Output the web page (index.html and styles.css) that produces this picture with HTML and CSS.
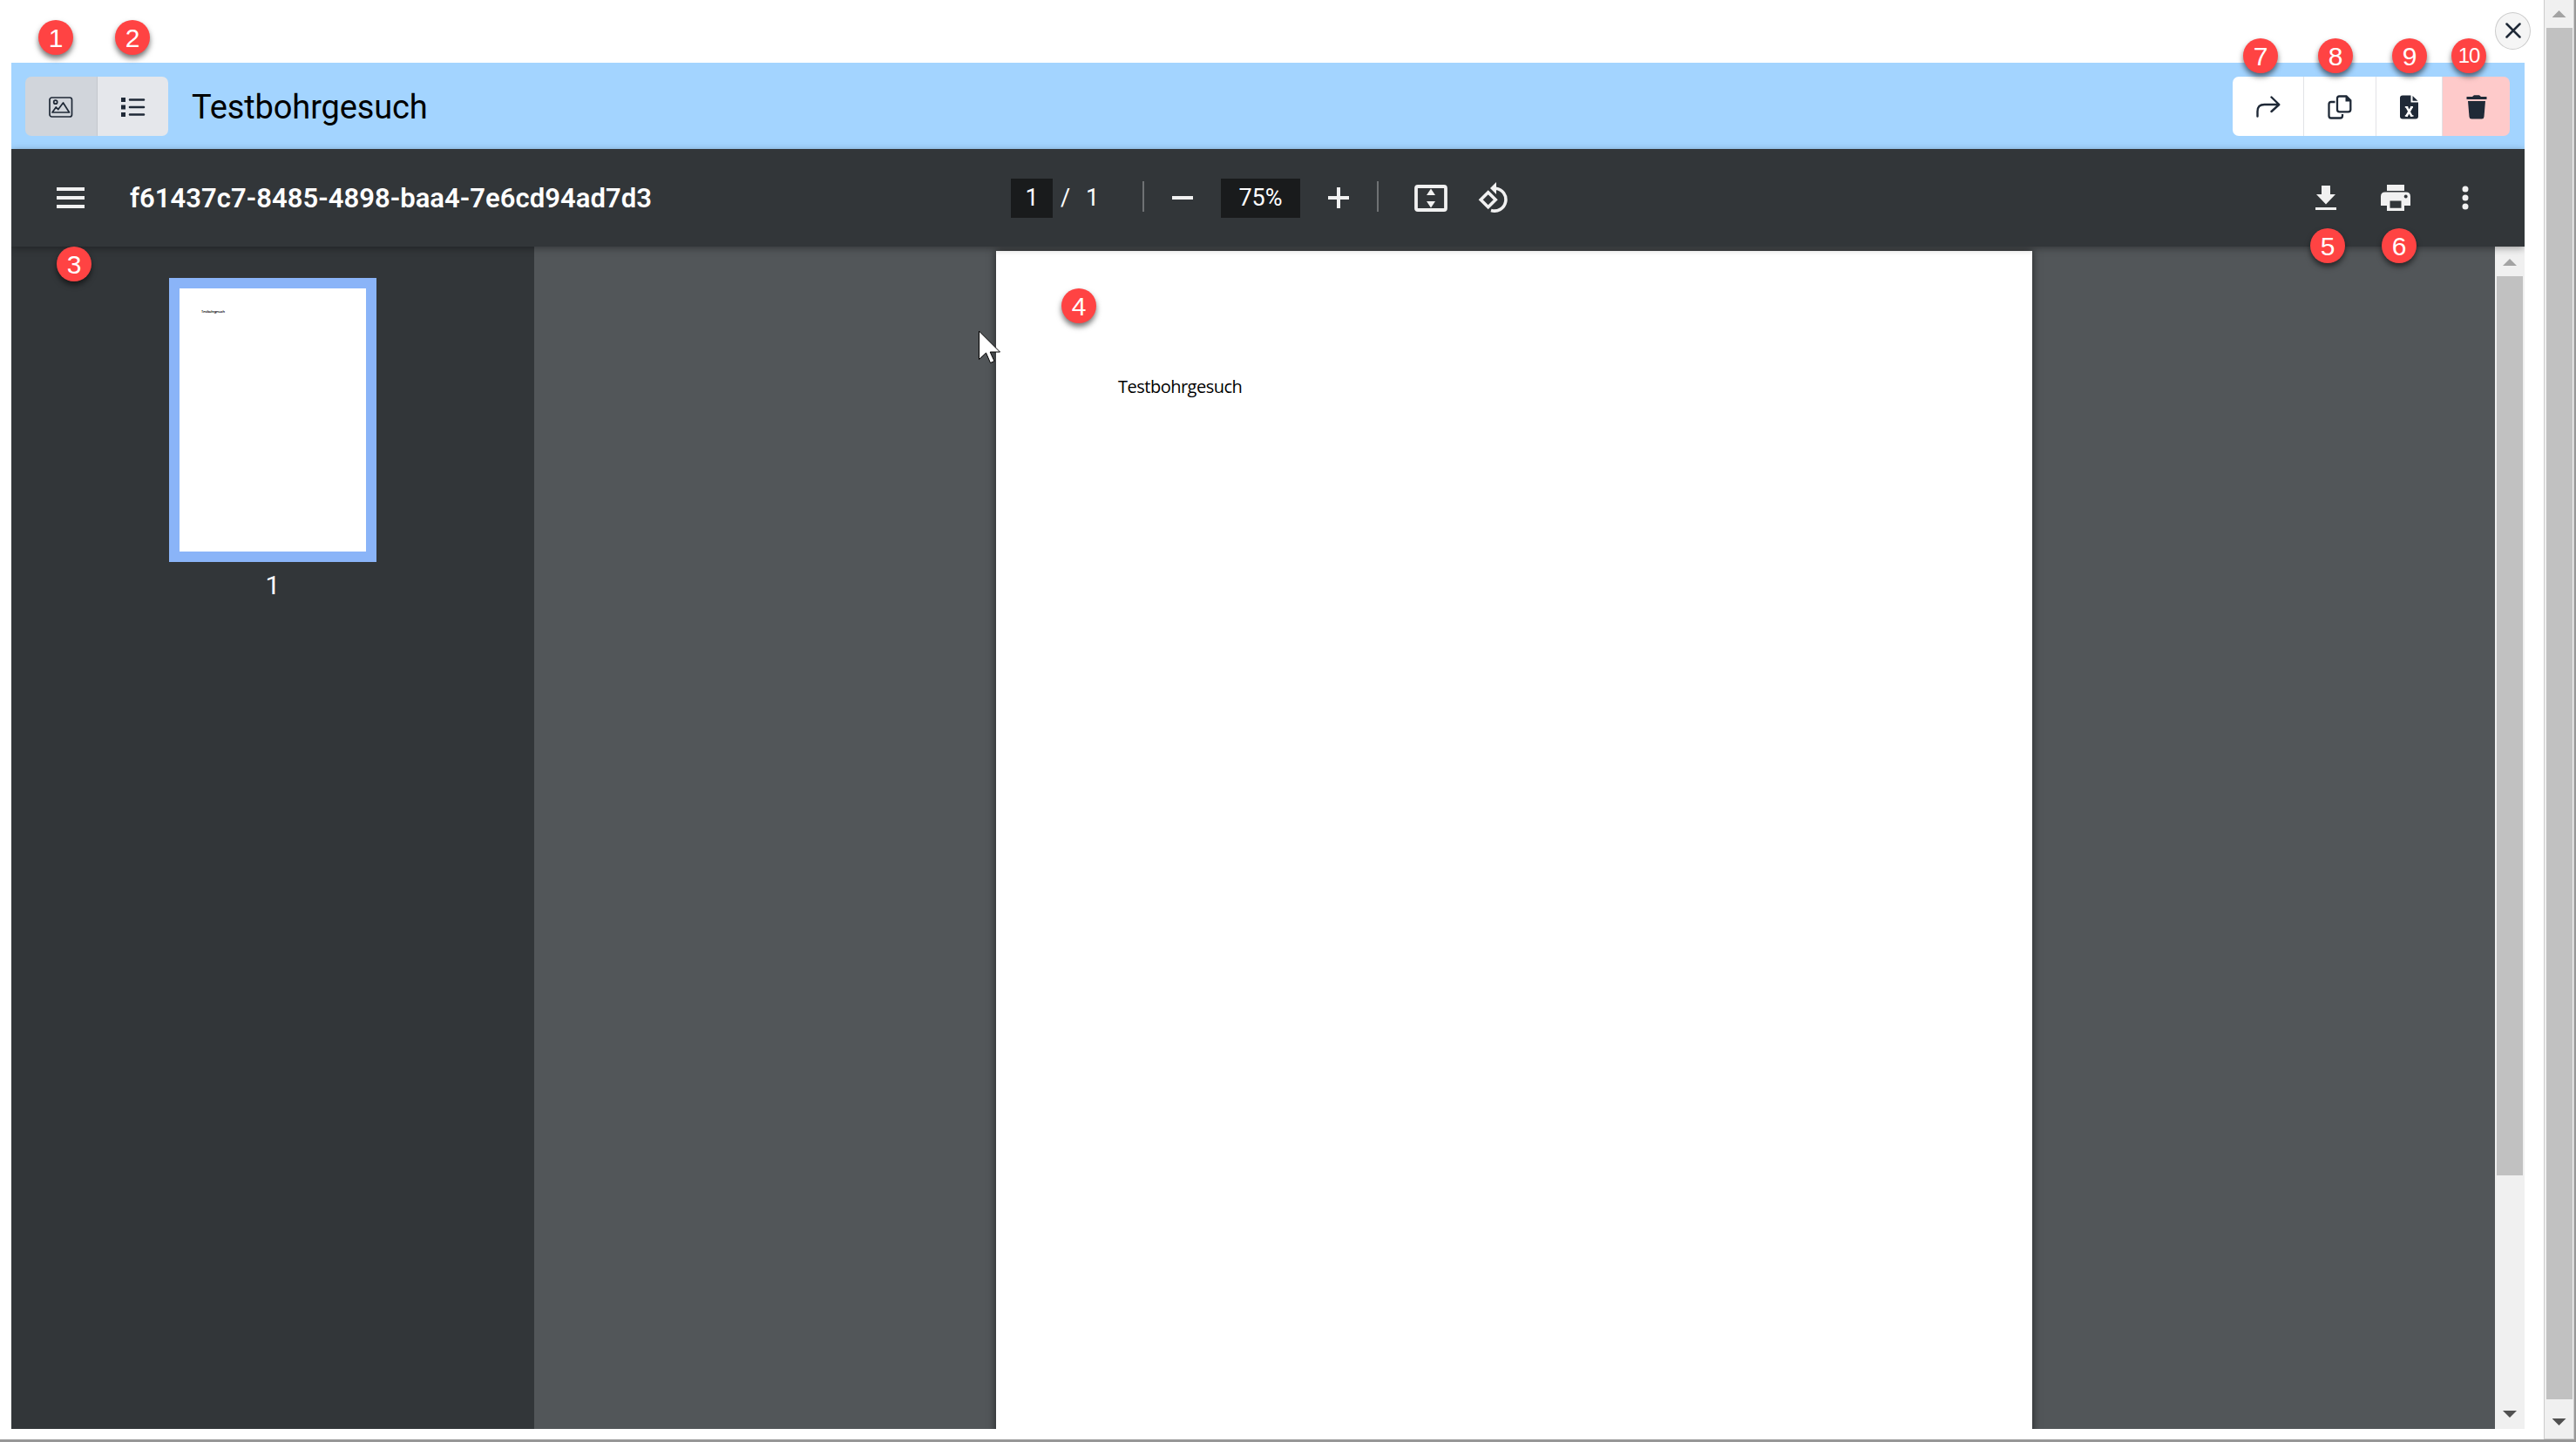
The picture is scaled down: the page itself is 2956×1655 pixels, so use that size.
FILE: index.html
```html
<!DOCTYPE html>
<html lang="de">
<head>
  <meta charset="UTF-8">
  <title>Testbohrgesuch</title>
  <link rel="stylesheet" href="styles.css">
</head>
<body>

<div class="window">
  <div class="dialog">
    <div class="header">
      <div class="btn-group">
        <button class="btn btn-view active">
          <svg width="28" height="24" viewBox="0 0 28 24" fill="none" stroke="#1f2937" stroke-width="1.7" stroke-linejoin="round"><rect x="1" y="1" width="25.5" height="22" rx="2.5"/><circle cx="7.7" cy="6.2" r="2"/><path d="M4 18L8.300 12l2.500 2.600L16.500 7l7 11z"/></svg>
        </button>
        <button class="btn btn-list">
          <svg width="28" height="24" viewBox="0 0 28 24" fill="#1f2937"><path d="M0 1h5v5H0zM0 9.500h5v5H0zM0 18h5v5H0z"/><path d="M10 3.500h16M10 12h16M10 20.500h16" stroke="#1f2937" stroke-width="2.6" stroke-linecap="round"/></svg>
        </button>
      </div>
      <h1 class="title">Testbohrgesuch</h1>
      <div class="btn-group actions">
        <button class="btn btn-share">
          <svg width="28" height="26" viewBox="0 0 28 26" fill="none" stroke="#1f2937" stroke-width="2.4" stroke-linecap="round" stroke-linejoin="round"><path d="M1.500 23.500v-5.500q0-8 8-8H26M17.500 1.500l8.800 8.500-8.800 8"/></svg>
        </button>
        <button class="btn btn-copy">
          <svg width="28" height="28" viewBox="0 0 28 28" fill="none" stroke="#1f2937" stroke-width="2.300"><path d="M13.500 1.500h8l4.800 4.800v10.500q0 2.500-2.500 2.500h-10.300q-2.500 0-2.500-2.500V4q0-2.500 2.500-2.500z"/><path d="M20.500 1v6.500h6z" fill="#1f2937" stroke="none"/><path d="M8.500 8H4Q1.500 8 1.500 10.500V24q0 2.500 2.500 2.500h10.500q2.500 0 2.500-2.500v-2"/></svg>
        </button>
        <button class="btn btn-excel">
          <svg width="21" height="28" viewBox="0 0 21 28"><path d="M3 0.500h9.500v8H21V24.500q0 3-3 3H3q-3 0-3-3v-21q0-3 3-3z" fill="#1f2937"/><path d="M14.500 1v5.800h6z" fill="#1f2937"/><path d="M7.500 13.500l6 11M13.800 13.500l-6.500 11" stroke="#fff" stroke-width="2.600"/><path d="M5.800 13.800h3.500M12 13.800h3M5.800 24h3M12 24h3.500" stroke="#fff" stroke-width="1.400"/></svg>
        </button>
        <button class="btn btn-delete">
          <svg width="24" height="28" viewBox="0 0 24 28" fill="#1f2937"><path d="M0.500 2h6.500l2-1.700h6l2 1.700h6.500v3H0.500zM2 7h20l-1.500 18q-.2 2.500-2.700 2.500H6.200q-2.500 0-2.700-2.500z"/></svg>
        </button>
      </div>
    </div>

    <div class="toolbar">
      <svg class="menu-icon" width="32" height="24" viewBox="0 0 32 24" fill="#f1f1f1"><path d="M0 0h32v4H0zM0 10h32v4H0zM0 20h32v4H0z"/></svg>
      <span class="filename">f61437c7-8485-4898-baa4-7e6cd94ad7d3</span>
      <div class="controls">
        <span class="page-input">1</span>
        <span class="slash">/</span>
        <span class="page-count">1</span>
        <span class="divider"></span>
        <svg class="zoom-out" width="24" height="24" viewBox="0 0 24 24"><path d="M0 10h24v4H0z" fill="#f1f1f1"/></svg>
        <span class="zoom-input">75%</span>
        <svg class="zoom-in" width="24" height="24" viewBox="0 0 24 24"><path d="M0 10h10V0h4v10h10v4H14v10h-4V14H0z" fill="#f1f1f1"/></svg>
        <span class="divider second"></span>
        <svg class="fit" width="38" height="31" viewBox="0 0 38 31"><rect x="2" y="2" width="34" height="27" rx="2" fill="none" stroke="#f1f1f1" stroke-width="3.800"/><path d="M19 4.500l5 7.500H14zM19 26.500l5-7.500H14z" fill="#f1f1f1"/></svg>
        <svg class="rotate" width="37" height="36" viewBox="0 0 37 36" fill="none" stroke="#f1f1f1" stroke-width="3.600"><path d="M11.700 11.700l8.500 8.500-8.500 8.500-8.500-8.500z"/><path d="M20.500 7.200a13 13 0 1 1-5.500 25.300"/><path d="M21 0v14L14 7z" fill="#f1f1f1" stroke="none"/></svg>
      </div>
      <div class="tools">
        <svg width="24" height="30" viewBox="0 0 24 30" fill="#f1f1f1"><path d="M7 1h10v10h6L12 22.500 1 11h6zM0 26h24v3H0z"/></svg>
        <svg width="34" height="30" viewBox="0 0 34 30" fill="#f1f1f1"><path d="M7 0h20v7H7z"/><path fill-rule="evenodd" d="M5 8.500h24q5 0 5 5V24h-7v6H7v-6H0V13.500q0-5 5-5zM10.500 18.500v8.300h13v-8.300zM28.700 11.500a2 2 0 1 0 .01 0z"/></svg>
        <svg width="8" height="28" viewBox="0 0 8 28" fill="#f1f1f1"><circle cx="4" cy="4" r="3.500"/><circle cx="4" cy="14" r="3.500"/><circle cx="4" cy="24" r="3.500"/></svg>
      </div>
    </div>

    <div class="viewer">
      <div class="sidebar">
        <div class="thumb"><span>Testbohrgesuch</span></div>
        <div class="thumb-number">1</div>
      </div>
      <div class="document">
        <div class="page">Testbohrgesuch</div>
      </div>
      <div class="scrollbar inner">
        <span class="arrow up"></span>
        <span class="handle"></span>
        <span class="arrow down"></span>
      </div>
    </div>
  </div>

  <div class="scrollbar outer">
    <span class="arrow up"></span>
    <span class="handle"></span>
    <span class="arrow down"></span>
  </div>

  <button class="close">
    <svg width="18" height="18" viewBox="0 0 18 18" stroke="#1f2937" stroke-width="2.500" stroke-linecap="round"><path d="M1.500 1.500l15 15M16.500 1.500l-15 15"/></svg>
  </button>

  <svg class="cursor" width="26" height="39" viewBox="0 0 26 39"><path d="M.5 1v32.500l8-7.500 5 11.500 4.500-2-4.800-10.500h11.300z" fill="#fff" stroke="#000" stroke-width="1"/></svg>

  <span class="badge b1">1</span>
  <span class="badge b2">2</span>
  <span class="badge b3">3</span>
  <span class="badge b4">4</span>
  <span class="badge b5">5</span>
  <span class="badge b6">6</span>
  <span class="badge b7">7</span>
  <span class="badge b8">8</span>
  <span class="badge b9">9</span>
  <span class="badge b10">10</span>
</div>

</body>
</html>
```
FILE: styles.css
```css
* {
  box-sizing: border-box;
}

body {
  margin: 0;
  background: #fff;
  font-family: Roboto, sans-serif;
  overflow: hidden;
}

svg {
  display: block;
  flex: none;
}

.window {
  position: relative;
  display: flex;
  width: 2956px;
  height: 1655px;
  border-right: 2px solid #999;
  border-bottom: 3px solid #979797;
}

.dialog {
  display: flex;
  flex-direction: column;
  width: 2884px;
  height: 1568px;
  margin: 72px 22px 0 13px;
  overflow: hidden;
}

/* blue header */
.header {
  display: flex;
  align-items: center;
  height: 99px;
  padding: 1px 17px 0 16px;
  background: #a3d4ff;
}

.btn-group {
  display: flex;
  height: 68px;
  border-radius: 7px;
  overflow: hidden;
}

.btn {
  display: flex;
  align-items: center;
  justify-content: center;
  padding: 2px 0 0;
  border: 0;
  background: #fff;
}

.btn + .btn {
  border-left: 1px solid #e2e3e6;
}

.btn-view {
  width: 82px;
  background: #d1d5db;
}

.btn-list {
  width: 82px;
  background: #e5e7eb;
}

.btn + .btn-list {
  border-color: #c4c8ce;
}

.btn-share {
  width: 81px;
}

.btn-copy {
  width: 83px;
}

.btn-excel {
  width: 76px;
}

.btn-delete {
  width: 78px;
  background: #fecaca;
}

.title {
  margin: 2px 0 0 27px;
  font-size: 38px;
  font-weight: 400;
  line-height: 46px;
  letter-spacing: -.12px;
}

.actions {
  margin-left: auto;
}

/* pdf toolbar */
.toolbar {
  position: relative;
  z-index: 1;
  display: flex;
  align-items: center;
  height: 112px;
  padding-left: 52px;
  background: #323639;
  box-shadow: 0 2px 8px rgba(0, 0, 0, .35);
  color: #fff;
}

.filename {
  width: 1011px;
  margin-left: 52px;
  font-size: 31px;
  font-weight: 600;
  letter-spacing: .05px;
}

.controls {
  display: flex;
  align-items: center;
  font-size: 27px;
}

.page-input,
.zoom-input {
  height: 45px;
  background: #191b1c;
  line-height: 45px;
  text-align: center;
}

.page-input {
  width: 48px;
}

.slash {
  width: 12px;
  margin-left: 9px;
}

.page-count {
  width: 16px;
  margin-left: 17px;
}

.divider {
  width: 2px;
  height: 35px;
  margin: 0 0 4px 49px;
  background: #6f7274;
}

.zoom-out {
  margin-left: 32px;
}

.zoom-input {
  width: 91px;
  margin-left: 32px;
}

.zoom-in {
  margin-left: 32px;
}

.divider.second {
  margin-left: 32px;
}

.fit {
  margin-left: 41px;
}

.rotate {
  margin-left: 35px;
}

.tools {
  display: flex;
  align-items: center;
  gap: 51px;
  margin-left: auto;
  padding-right: 64px;
}

.tools svg:last-child {
  margin-left: 8px;
}

/* pdf content */
.viewer {
  display: flex;
  height: 1357px;
}

.sidebar {
  width: 600px;
  padding: 36px 0 0 181px;
  background: #323639;
}

.thumb {
  width: 238px;
  height: 326px;
  padding: 24px 0 0 25px;
  border: 12px solid #8ab4f8;
  background: #fff;
  font: 600 4px "Open Sans", sans-serif;
  letter-spacing: -.3px;
}

.thumb span {
  display: block;
}

.thumb-number {
  width: 238px;
  margin-top: 9px;
  color: #fff;
  font-size: 30px;
  line-height: 36px;
  text-align: center;
}

.document {
  width: 2250px;
  padding: 5px 0 0 530px;
  background: #525659;
  overflow: hidden;
}

.page {
  width: 1189px;
  height: 1400px;
  padding: 141px 140px;
  background: #fff;
  box-shadow: 0 0 9px rgba(0, 0, 0, .6);
  color: #000;
  font: 20px/29px "Open Sans", sans-serif;
  letter-spacing: -.5px;
}

/* scrollbars */
.scrollbar {
  display: flex;
  flex-direction: column;
  align-items: center;
  background: #f0f0f0;
}

.inner {
  width: 34px;
  padding: 14px 0 13px;
}

.outer {
  width: 35px;
  padding: 12px 0 15px;
  border-left: 1px solid #ccc;
  border-right: 1px solid #ccc;
  border-bottom: 1px solid #ccc;
}

.handle {
  width: 30px;
  margin-top: 12px;
  background: #c1c1c1;
}

.inner .handle {
  height: 1032px;
}

.outer .handle {
  height: 1574px;
}

.arrow {
  width: 16px;
  height: 8px;
  background: #a3a3a3;
  clip-path: polygon(50% 0, 100% 100%, 0 100%);
}

.arrow.down {
  margin-top: auto;
  background: #505050;
  clip-path: polygon(0 0, 100% 0, 50% 100%);
}

.close {
  position: absolute;
  left: 2863px;
  top: 14px;
  display: flex;
  align-items: center;
  justify-content: center;
  width: 41px;
  height: 43px;
  padding: 0 0 1px;
  border: 1px solid #ccc;
  border-radius: 50%;
  background: #f5f5f5;
}

.cursor {
  position: absolute;
  left: 1123px;
  top: 379px;
  z-index: 2;
}

/* numbered markers */
.badge {
  position: absolute;
  z-index: 3;
  width: 40px;
  height: 40px;
  border-radius: 50%;
  background: #ff4343;
  box-shadow: 0 4px 6px rgba(0, 0, 0, .55);
  color: #fff;
  font: 30px/42px "Liberation Sans", Arial, sans-serif;
  text-align: center;
}

.b1 { left: 44px; top: 23px; }
.b2 { left: 132px; top: 23px; }
.b3 { left: 65px; top: 283px; }
.b4 { left: 1218px; top: 331px; }
.b5 { left: 2651px; top: 262px; }
.b6 { left: 2733px; top: 262px; }
.b7 { left: 2574px; top: 44px; }
.b8 { left: 2660px; top: 44px; }
.b9 { left: 2745px; top: 44px; }
.b10 { left: 2813px; top: 44px; font-size: 24px; line-height: 39px; letter-spacing: -1px; }
```
